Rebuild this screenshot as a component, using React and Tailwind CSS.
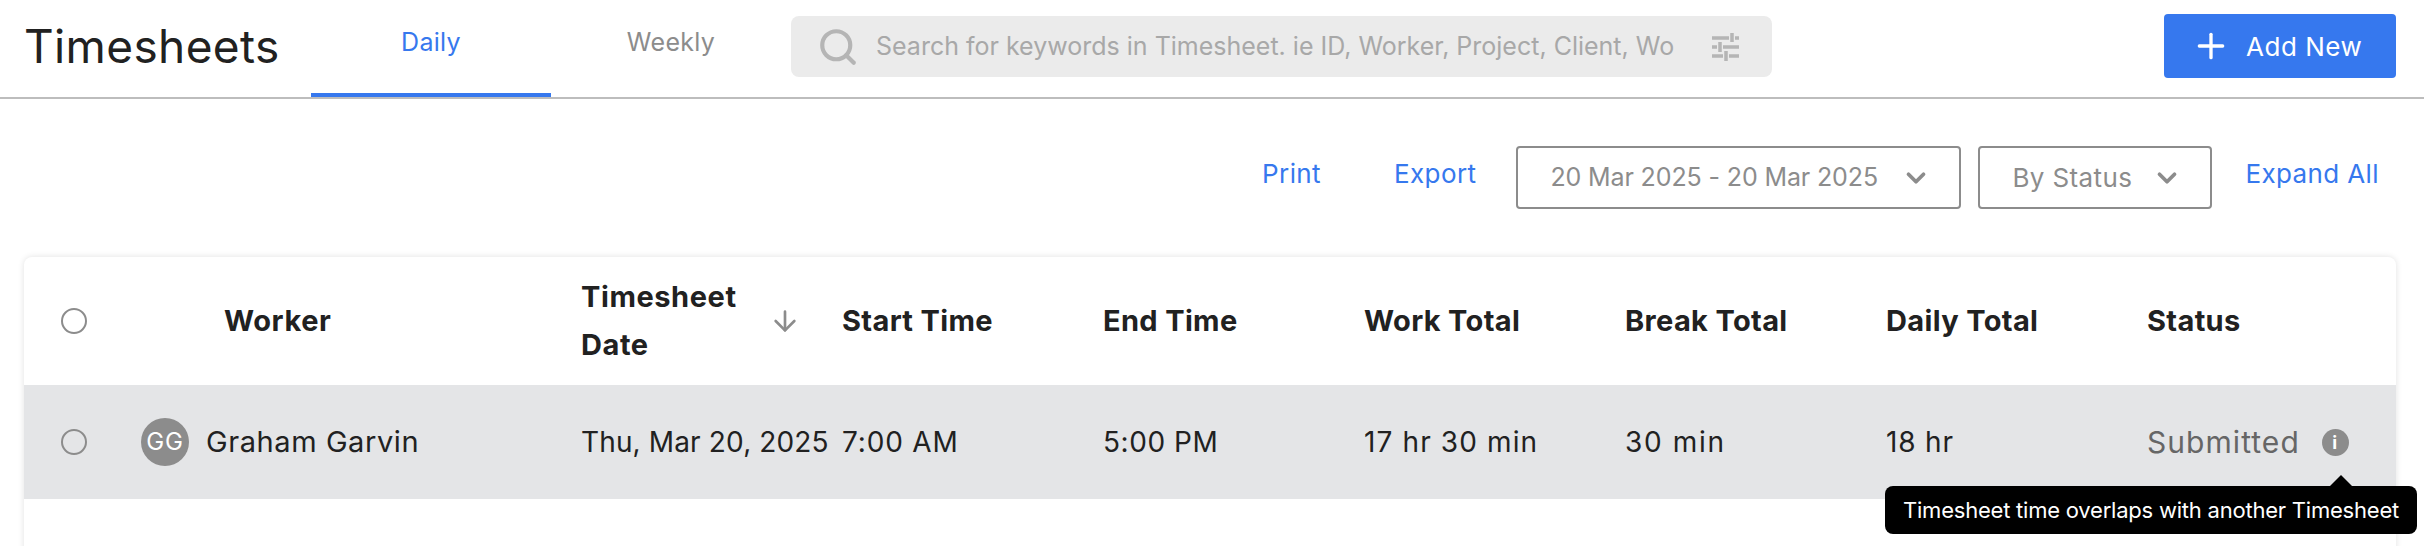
import React from "react";
import { ArrowDown, ChevronDown, Plus, Search } from "lucide-react";

const columns = [
  { label: "Start Time", value: "7:00 AM", valueClass: "tracking-[0.03em]" },
  { label: "End Time", value: "5:00 PM", valueClass: "tracking-[0.02em]" },
  { label: "Work Total", value: "17 hr 30 min", valueClass: "tracking-[0.04em]" },
  { label: "Break Total", value: "30 min", valueClass: "tracking-[0.06em]" },
  { label: "Daily Total", value: "18 hr", valueClass: "tracking-[0.03em]" },
];

const TuneIcon = () => (
  <svg viewBox="0 0 28 30" className="w-7 h-[30px] shrink-0 text-[#b5b5b5]" fill="none" stroke="currentColor" strokeWidth="3.5">
    <path d="M0 6h17M23 6h4M20 1v9M0 15h5M11 15h16M8 10v10M0 24h11M17 24h10M14 19v10" />
  </svg>
);

const Radio = () => (
  <span className="w-[26px] h-[26px] rounded-full border-2 border-[#8c8c8c] shrink-0" />
);

const App = () => {
  return (
    <div className="w-[2424px] h-[546px] overflow-hidden bg-white font-['Inter',sans-serif] text-[#212121] tracking-[0.02em]">
      <header className="h-[99px] flex items-start border-b-2 border-[#bdbdbd]">
        <h1 className="w-[311px] pl-6 pt-[19px] text-[46px] leading-[54px] font-normal tracking-[0.008em]">
          Timesheets
        </h1>
        <div className="w-[240px] h-[97px] border-b-4 border-[#3678ee] text-center text-[#3678ee] text-[25px] pt-[24px] leading-[36px]">
          Daily
        </div>
        <div className="w-[240px] text-center text-[#8c8c8c] text-[25px] pt-[24px] leading-[36px]">
          Weekly
        </div>
        <div className="w-[981px] h-[61px] mt-4 rounded-lg bg-[#ebebeb] flex items-center pl-[26px] pr-[32px]">
          <Search size={42} strokeWidth={2.4} className="text-[#b5b5b5] shrink-0" />
          <span className="ml-[17px] flex-1 overflow-hidden whitespace-nowrap text-[25px] text-[#a8a8a8] tracking-normal">
            Search for keywords in Timesheet. ie ID, Worker, Project, Client, Wo
          </span>
          <TuneIcon />
        </div>
        <button className="ml-auto mr-7 mt-[14px] w-[232px] h-16 rounded bg-[#3678ee] text-white text-[26px] tracking-[0.02em] flex items-center pl-[27px] gap-[15px]">
          <Plus size={40} strokeWidth={2} />
          Add New
        </button>
      </header>

      <div className="h-[158px] pt-[47px] pr-[45px] flex items-start justify-end text-[26px] text-[#3678ee] tracking-[0.015em]">
        <span className="mt-2 mr-[73px]">Print</span>
        <span className="mt-2 mr-[40px]">Export</span>
        <div className="w-[445px] h-[63px] mr-[17px] pl-8 pr-[28px] rounded border-2 border-[#8c8c8c] text-[25px] text-[#8c8c8c] tracking-[-0.005em] flex items-center justify-between">
          20 Mar 2025 - 20 Mar 2025
          <ChevronDown size={30} strokeWidth={3} />
        </div>
        <div className="w-[234px] h-[63px] mr-[33px] pl-8 pr-[28px] rounded border-2 border-[#8c8c8c] text-[#8c8c8c] flex items-center justify-between">
          By Status
          <ChevronDown size={30} strokeWidth={3} />
        </div>
        <span className="mt-2">Expand All</span>
      </div>

      <div className="ml-6 mr-7 h-[400px] rounded-t-lg bg-white shadow-[0_0_6px_rgba(0,0,0,0.12)]">
        <div className="h-[128px] flex items-center text-[29px] font-bold tracking-[0.012em]">
          <div className="w-[557px] flex items-center pl-[37px]">
            <Radio />
            <span className="ml-[137px] tracking-[0.02em]">Worker</span>
          </div>
          <div className="w-[261px] flex items-center">
            <span className="w-[188px] leading-[48px] tracking-[0.02em]">Timesheet Date</span>
            <ArrowDown size={32} strokeWidth={2} className="text-[#8c8c8c]" />
          </div>
          {columns.map((col) => (
            <div key={col.label} className="w-[261px]">
              {col.label}
            </div>
          ))}
          <div className="w-[248px]">Status</div>
        </div>

        <div className="relative h-[114px] flex items-center bg-[#e4e5e7] text-[28px]">
          <div className="w-[557px] flex items-center pl-[37px]">
            <Radio />
            <span className="ml-[54px] w-12 h-12 rounded-full bg-[#8c8c8c] text-white text-[24px] tracking-[0.04em] flex items-center justify-center">
              GG
            </span>
            <span className="ml-[17px] text-[29px] tracking-[0.02em]">Graham Garvin</span>
          </div>
          <div className="w-[261px] whitespace-nowrap tracking-[0.005em]">Thu, Mar 20, 2025</div>
          {columns.map((col) => (
            <div key={col.value} className={`w-[261px] ${col.valueClass}`}>
              {col.value}
            </div>
          ))}
          <div className="w-[248px] flex items-center text-[30px] text-[#666666] tracking-[0.035em]">
            Submitted
            <span className="ml-[22px] w-[27px] h-[27px] rounded-full bg-[#8c8c8c] text-white text-[18px] font-bold flex items-center justify-center">
              i
            </span>
          </div>

          {/* tooltip hangs past the card edge */}
          <div className="absolute left-[1861px] top-[101px] w-[532px] h-12 rounded-lg bg-black text-white text-[22px] tracking-[-0.01em] flex items-center justify-center whitespace-nowrap">
            <span className="absolute -top-[11px] left-[444px] w-0 h-0 border-x-[12px] border-x-transparent border-b-[12px] border-b-black" />
            Timesheet time overlaps with another Timesheet
          </div>
        </div>
      </div>
    </div>
  );
};

export default App;
